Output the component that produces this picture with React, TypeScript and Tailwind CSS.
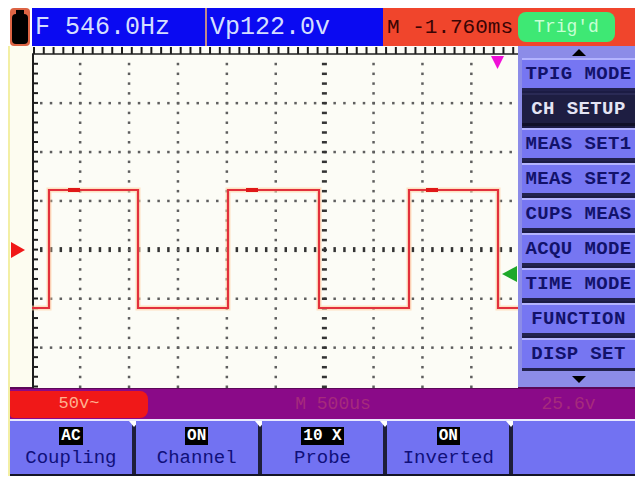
const MENU = [
  { label: 'TPIG MODE', active: false },
  { label: 'CH SETUP', active: true },
  { label: 'MEAS SET1', active: false },
  { label: 'MEAS SET2', active: false },
  { label: 'CUPS MEAS', active: false },
  { label: 'ACQU MODE', active: false },
  { label: 'TIME MODE', active: false },
  { label: 'FUNCTION', active: false },
  { label: 'DISP SET', active: false },
];

const BUTTONS = [
  { value: 'AC', label: 'Coupling' },
  { value: 'ON', label: 'Channel' },
  { value: '10 X', label: 'Probe' },
  { value: 'ON', label: 'Inverted' },
  { value: '', label: '' },
];

const W = 486;
const H = 342;
const DIV = 48.9;
const STEP = 9.78;

function Graticule() {
  const dots: JSX.Element[] = [];

  // horizontal grid lines
  for (let k = 1; k <= 6; k++) {
    const y = 8 + DIV * k;
    for (let x = 9; x < W; x += STEP) {
      if (k === 4) dots.push(<rect key={`h${k}-${x}`} x={x - 1} y={y - 2.5} width={2.5} height={5} fill="#333" />);
      else dots.push(<rect key={`h${k}-${x}`} x={x - 1} y={y - 1} width={2.5} height={2.5} fill="#5e5e5e" />);
    }
  }
  // vertical grid lines
  for (let k = 1; k <= 9; k++) {
    const x = -1 + DIV * k;
    for (let y = 8 + STEP; y < H; y += STEP) {
      if (k === 6) dots.push(<rect key={`v${k}-${y}`} x={x - 2.5} y={y - 1} width={5} height={2.5} fill="#333" />);
      else dots.push(<rect key={`v${k}-${y}`} x={x - 1} y={y - 1} width={2.5} height={2.5} fill="#5e5e5e" />);
    }
  }

  const topTicks: JSX.Element[] = [];
  for (let x = 2; x < W; x += STEP) {
    topTicks.push(<line key={`t${x}`} x1={x} y1={1} x2={x} y2={8} stroke="#1e1e1e" strokeWidth={2} />);
  }
  const leftTicks: JSX.Element[] = [];
  for (let y = 8 + STEP; y < H; y += STEP) {
    leftTicks.push(<line key={`l${y}`} x1={1} y1={y} x2={6} y2={y} stroke="#1e1e1e" strokeWidth={2} />);
  }

  const wave =
    'M0 262 L17 262 L17 144 L106 144 L106 262 L196 262 L196 144 L287 144 L287 262 L377 262 L377 144 L466 144 L466 262 L486 262';

  return (
    <svg width={W} height={H} viewBox={`0 0 ${W} ${H}`} className="block">
      <rect width={W} height={H} fill="#fcfcf6" />
      {dots}
      <line x1={0} y1={8} x2={W} y2={8} stroke="#1e1e1e" strokeWidth={1.5} />
      {topTicks}
      <line x1={1} y1={8} x2={1} y2={H} stroke="#1e1e1e" strokeWidth={2} />
      {leftTicks}
      <path d={wave} fill="none" stroke="#ffcfa0" strokeWidth={5} opacity={0.6} />
      <path d={wave} fill="none" stroke="#e2303c" strokeWidth={2.2} />
      <line x1={36} y1={144} x2={48} y2={144} stroke="#e01818" strokeWidth={4} />
      <line x1={214} y1={144} x2={226} y2={144} stroke="#e01818" strokeWidth={4} />
      <line x1={394} y1={144} x2={406} y2={144} stroke="#e01818" strokeWidth={4} />
      <polygon points="459,10 472,10 465.5,23" fill="#f010d8" />
      <polygon points="470,228 485,220 485,236" fill="#1fa82a" />
    </svg>
  );
}

export default function App() {
  return (
    <div
      className="w-[637px] h-[478px] bg-white overflow-hidden pl-[8px] pr-[2px] pt-[8px]"
      style={{ fontFamily: '"Liberation Mono", "DejaVu Sans Mono", monospace' }}
    >
      {/* Top status bar */}
      <div className="flex h-[38px]">
        <div className="w-[24px] px-[2px] flex">
          <div className="flex-1 bg-[#dc6444] p-[2px] flex flex-col items-center rounded-sm">
            <div className="w-[8px] h-[4px] bg-black" />
            <div className="flex-1 w-full bg-black rounded-sm" />
          </div>
        </div>
        <div className="w-[173px] bg-[#0a0af2] text-[#d4deff] text-[25px] leading-none flex items-center pl-[3px] whitespace-pre">
          F 546.0Hz
        </div>
        <div className="w-[2px] bg-[#c08a8a]" />
        <div className="w-[176px] bg-[#0a0af2] text-[#d4deff] text-[25px] leading-none flex items-center pl-[3px] whitespace-pre">
          Vp122.0v
        </div>
        <div className="flex-1 bg-[#f0452c] flex items-center pl-[4px]">
          <span className="text-[#3a0404] text-[21px] leading-none w-[131px] whitespace-pre">M -1.760ms</span>
          <div className="w-[97px] h-[30px] rounded-lg bg-[#3ee874] text-[#c8ffd4] text-[18px] flex items-center justify-center">
            Trig'd
          </div>
        </div>
      </div>

      <div className="border-l-2 border-[#f3efa4]">
        {/* Screen row */}
        <div className="flex h-[341px]">
          <div className="w-[22px] bg-[#fdfcf0]">
            <svg width={22} height={341} className="block">
              <polygon points="1,196 15,204 1,212" fill="#f01818" />
            </svg>
          </div>
          <Graticule />
          <div className="w-[117px] bg-[#8c8ce8] flex flex-col pl-[4px]">
            <div className="h-[12px] flex items-center justify-center">
              <div className="w-0 h-0 border-l-[7px] border-r-[7px] border-b-[7px] border-l-transparent border-r-transparent border-b-black" />
            </div>
            <div className="flex flex-col gap-[2px] bg-[#1c1c44]">
              {MENU.map(({ label, active }) => (
                <div
                  key={label}
                  className={`h-[33px] flex items-center justify-center font-bold text-[19px] tracking-[0.4px] whitespace-pre border-t-2 border-b-[3px] ${
                    active
                      ? 'bg-[#1e1e42] text-[#e4e4f4] border-t-[#2a2a55] border-b-[#101028]'
                      : 'bg-[#7676f2] text-[#12126a] border-t-[#b4b4ff] border-b-[#22224e]'
                  }`}
                >
                  {label}
                </div>
              ))}
            </div>
            <div className="flex-1 flex items-center justify-center">
              <div className="w-0 h-0 border-l-[7px] border-r-[7px] border-t-[7px] border-l-transparent border-r-transparent border-t-black" />
            </div>
          </div>
        </div>

        {/* Time base bar */}
        <div className="flex h-[32px] bg-[#8a0a88] items-center border-t-2 border-[#5c0858]">
          <div className="w-[138px] h-[27px] bg-[#f01818] rounded-r-lg rounded-bl-sm flex items-center justify-center text-[#ffb090] text-[17px]">
            50v~
          </div>
          <div className="w-[370px] text-center text-[#a62a7c] text-[18px] whitespace-pre">M 500us</div>
          <div className="flex-1 text-center text-[#a62a7c] text-[18px] pr-[16px]">25.6v</div>
        </div>

        {/* Soft key row */}
        <div className="flex h-[57px] bg-[#1e1e3a] border-t-2 border-[#e8e8ff] border-b-2 border-b-[#141428]">
          {BUTTONS.map(({ value, label }, i) => (
            <div key={i} className="contents">
              {i > 0 && (
                <div className="w-[4px] flex justify-center">
                  <div className="w-0 h-0 border-l-[5px] border-r-[5px] border-t-[6px] border-l-transparent border-r-transparent border-t-white" />
                </div>
              )}
              <div className="flex-1 bg-[#7272f2] flex flex-col items-center justify-center gap-[3px]">
                {value && (
                  <span className="bg-black text-white font-bold text-[16px] leading-[18px] px-[2px] whitespace-pre">
                    {value}
                  </span>
                )}
                {label && <span className="text-[#10107a] text-[19px] leading-[20px]">{label}</span>}
              </div>
            </div>
          ))}
        </div>
      </div>
    </div>
  );
}
